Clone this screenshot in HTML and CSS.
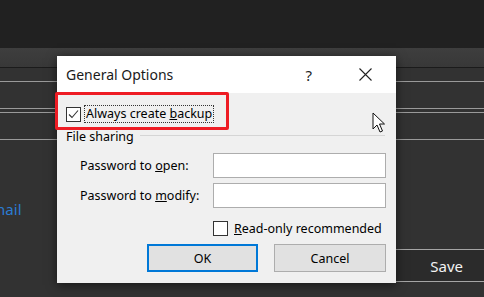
FILE: index.html
```html
<!DOCTYPE html>
<html>
<head>
<meta charset="utf-8">
<link rel="stylesheet" href="styles.css">
</head>
<body>
<div class="app">
  <div class="topbar"></div>
  <div class="tabs"></div>
  <div class="content">
    <div class="rule r1"></div>
    <div class="rule r2"></div>
    <div class="rule r3"></div>
    <div class="rule r4"></div>
    <div class="email-row"><span class="email">Email</span></div>
    <div class="save-row"><span class="save">Save</span></div>
  </div>

  <div class="dialog">
    <div class="titlebar">
      <span class="title">General Options</span>
      <span class="help">?</span>
      <svg class="close" width="13" height="13" viewBox="0 0 13 13"><path d="M0.5 0.5 L12.5 12.5 M12.5 0.5 L0.5 12.5" stroke="#222" stroke-width="1.1" fill="none"/></svg>
    </div>
    <div class="dbody">
      <div class="check-row">
        <span class="cbox checked"><svg width="13" height="13" viewBox="0 0 13 13"><path d="M2 6.5 L5 9.5 L11 2.5" stroke="#333" stroke-width="1.1" fill="none"/></svg></span>
        <span class="focus-label">Always create <u>b</u>ackup</span>
      </div>
      <div class="group-row">
        <span>File sharing</span>
        <span class="sep"></span>
      </div>
      <div class="pw-grid">
        <label>Password to <u>o</u>pen:</label>
        <span class="input"></span>
        <label>Password to <u>m</u>odify:</label>
        <span class="input"></span>
      </div>
      <div class="ro-row">
        <span class="cbox"></span>
        <span><u>R</u>ead-only recommended</span>
      </div>
      <div class="buttons">
        <span class="btn default">OK</span>
        <span class="btn">Cancel</span>
      </div>
    </div>
    <div class="highlight"></div>
  </div>

  <svg class="cursor" width="14" height="22" viewBox="0 0 14 22"><path d="M1 1 L1 17 L5 13 L8 20 L10.5 19 L7.5 12 L12.5 12 Z" fill="#fff" stroke="#111" stroke-width="1" stroke-linejoin="round"/></svg>
</div>
</body>
</html>
```
FILE: styles.css
```css
html, body {
  margin: 0;
  padding: 0;
}
body {
  width: 484px;
  height: 297px;
  overflow: hidden;
  background: #323232;
  font-family: "Noto Sans", "Open Sans", sans-serif;
}
.app {
  position: relative;
  width: 484px;
  height: 297px;
  overflow: hidden;
}
.topbar {
  height: 48px;
  background: #212121;
}
.tabs {
  height: 19px;
  background: linear-gradient(#3e3e3e, #383838);
  border-bottom: 1px solid #1b1b1b;
}
.content {
  display: flex;
  flex-direction: column;
}
.rule {
  height: 1px;
  background: #9a9a9a;
}
.r1 { margin-top: 13px; }
.r2 { margin-top: 26px; }
.r3 { margin-top: 3px; }
.r4 { margin-top: 26px; }
.email-row {
  margin-top: 59px;
  height: 20px;
  line-height: 20px;
  overflow: hidden;
}
.email {
  display: inline-block;
  margin-left: -17px;
  color: #2b7cd3;
  font-size: 15px;
}
.save-row {
  margin-top: 30px;
  margin-left: 300px;
  height: 31px;
  border-top: 1px solid #a5a5a5;
  border-bottom: 1px solid #a5a5a5;
  background: #2b2b2b;
  display: flex;
  justify-content: flex-end;
  align-items: center;
  padding-right: 21px;
}
.save {
  color: #f2f2f2;
  font-size: 15px;
}

/* dialog */
.dialog {
  position: absolute;
  left: 57px;
  top: 56px;
  width: 339px;
  height: 227px;
  background: #f0f0f0;
  box-shadow: 0 2px 10px rgba(0, 0, 0, 0.55);
  display: flex;
  flex-direction: column;
  color: #000;
  font-size: 12.5px;
}
.titlebar {
  height: 37px;
  background: #fff;
  display: flex;
  align-items: center;
  padding-left: 9px;
  padding-right: 24px;
}
.title {
  font-size: 14px;
  color: #1a1a1a;
  flex: 1;
}
.help {
  font-size: 15px;
  color: #222;
  margin-right: 47px;
}
.close {
  display: block;
}
.dbody {
  display: flex;
  flex-direction: column;
  padding: 12px 10px 11px 9px;
}
.check-row {
  display: flex;
  align-items: center;
  height: 18px;
}
.cbox {
  width: 13px;
  height: 13px;
  border: 1px solid #333;
  background: #fff;
  display: inline-flex;
  flex: none;
}
.focus-label {
  margin-left: 4px;
  padding: 0 1px;
  line-height: 16px;
  outline: 1px dotted #333;
}
.group-row {
  margin-top: 5px;
  height: 16px;
  display: flex;
  align-items: center;
}
.sep {
  flex: 1;
  height: 1px;
  background: #d5d5d5;
  margin-left: 6px;
  margin-right: 1px;
  margin-top: -2px;
}
.pw-grid {
  margin-top: 9px;
  padding-left: 14px;
  display: grid;
  grid-template-columns: 133px 173px;
  row-gap: 5px;
  align-items: center;
}
.input {
  height: 23px;
  background: #fff;
  border: 1px solid #adadad;
}
.ro-row {
  margin-top: 13px;
  margin-left: 147px;
  display: flex;
  align-items: center;
  gap: 6px;
  height: 15px;
}
.buttons {
  margin-top: 8px;
  display: flex;
  justify-content: flex-end;
  gap: 16px;
}
.btn {
  width: 110px;
  height: 26px;
  background: #e1e1e1;
  border: 1px solid #adadad;
  display: flex;
  align-items: center;
  justify-content: center;
}
.btn.default {
  width: 107px;
  height: 24px;
  border: 2px solid #0078d7;
}
.highlight {
  position: absolute;
  left: -2px;
  top: 36px;
  width: 168px;
  height: 32px;
  border: 3px solid #ee1c24;
  border-radius: 2px;
}
.cursor {
  position: absolute;
  left: 372px;
  top: 112px;
}
```
